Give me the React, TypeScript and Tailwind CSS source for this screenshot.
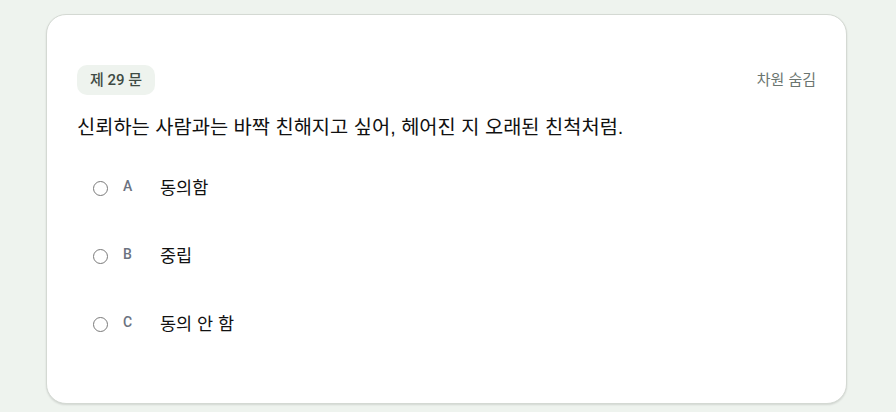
import React from "react";

const options = [
  { key: "A", label: "동의함" },
  { key: "B", label: "중립" },
  { key: "C", label: "동의 안 함" },
];

export default function App() {
  return (
    <div
      className="min-h-[412px] w-full bg-[#eef3ee] pl-[46px] pr-[49px] pt-[14px] pb-[8px]"
      style={{ fontFamily: '"Liberation Sans", "Noto Sans CJK KR", sans-serif' }}
    >
      <div className="h-[390px] rounded-[20px] border border-[#d4d9d3] bg-white px-[30px] pt-[50px] shadow-[0_1px_2px_rgba(0,0,0,0.12)]">
        <div className="flex h-[30px] items-center justify-between">
          <div className="flex h-[30px] w-[78px] items-center justify-center rounded-[10px] bg-[#eef3ee] font-['Roboto','Noto_Sans_CJK_KR',sans-serif] text-[15px] font-medium text-[#3e4b44]">
            제 29 문
          </div>
          <div className="text-[15px] text-[#6b7570]">차원 숨김</div>
        </div>
        <div className="mt-[18px] text-[19.8px] leading-[28px] text-[#111111]">
          신뢰하는 사람과는 바짝 친해지고 싶어, 헤어진 지 오래된 친척처럼.
        </div>
        <div className="mt-[13px] flex flex-col">
          {options.map((o) => (
            <div key={o.key} className="flex h-[68px] items-center">
              <div className="ml-[16px] h-[15px] w-[15px] rounded-full border-[1.5px] border-[#7a7a7a]" />
              <div className="ml-[15px] w-[22px] -translate-y-[2px] font-['Roboto',sans-serif] text-[14px] font-medium text-[#6b7280]">
                {o.key}
              </div>
              <div className="ml-[15px] text-[17.5px] text-[#111111]">{o.label}</div>
            </div>
          ))}
        </div>
      </div>
    </div>
  );
}
